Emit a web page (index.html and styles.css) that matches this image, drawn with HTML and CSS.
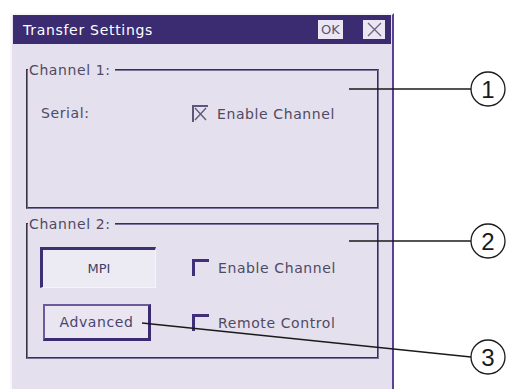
FILE: index.html
```html
<!DOCTYPE html>
<html lang="en">
<head>
    <meta charset="UTF-8">
    <title>Transfer Settings</title>
    <link rel="stylesheet" href="styles.css">
</head>
<body>
    <div class="page">
        <div class="dialog">
            <div class="titlebar">
                <span class="title">Transfer Settings</span>
                <span class="tb-ok">OK</span>
                <span class="tb-close">
                    <svg width="15" height="15" viewBox="0 0 15 15"><path d="M1 1 L14 14 M14 1 L1 14" stroke="#6d6585" stroke-width="1.4" fill="none"/></svg>
                </span>
            </div>

            <div class="dlg-body">
                <!-- Kanal 1 -->
                <fieldset class="group group-1">
                    <legend>Channel 1:</legend>
                    <div class="group-body">
                        <div class="row">
                            <span class="col-left label">Serial:</span>
                            <span class="check checked">
                                <svg width="14" height="15" viewBox="0 0 14 15"><path d="M2 2 L13 14 M13 2 L2 14" stroke="#5e5678" stroke-width="1.3" fill="none"/></svg>
                            </span>
                            <span class="check-text">Enable Channel</span>
                        </div>
                    </div>
                </fieldset>

                <!-- Kanal 2 -->
                <fieldset class="group group-2">
                    <legend>Channel 2:</legend>
                    <div class="group-body">
                        <div class="row">
                            <div class="col-left"><div class="field">MPI</div></div>
                            <span class="check"></span>
                            <span class="check-text">Enable Channel</span>
                        </div>
                        <div class="row row-2">
                            <div class="col-left"><div class="btn">Advanced</div></div>
                            <span class="check"></span>
                            <span class="check-text">Remote Control</span>
                        </div>
                    </div>
                </fieldset>
            </div>
        </div>

        <svg class="callouts" width="508" height="389" viewBox="0 0 508 389">
            <g stroke="#1a1a1a" stroke-width="1.3" fill="none">
                <line x1="349" y1="89" x2="471" y2="89"/>
                <line x1="349" y1="241" x2="471" y2="241"/>
                <line x1="142" y1="323" x2="471" y2="357"/>
            </g>
            <g stroke="#1a1a1a" stroke-width="1.3" fill="#fff">
                <circle cx="488" cy="89" r="17"/>
                <circle cx="488" cy="241" r="17"/>
                <circle cx="488" cy="357" r="17"/>
            </g>
            <g class="num" fill="#1a1a1a" text-anchor="middle">
                <text x="488" y="98">1</text>
                <text x="488" y="250">2</text>
                <text x="488" y="366">3</text>
            </g>
        </svg>
    </div>
</body>
</html>
```

FILE: styles.css
```css
body {
    margin: 0;
    background: #fff;
    font-family: 'DejaVu Sans', sans-serif;
    font-size: 14px;
    letter-spacing: 0.6px;
    color: #4f4a64;
}

.page {
    position: relative;
    width: 508px;
    height: 389px;
    overflow: hidden;
}

.dialog {
    box-sizing: border-box;
    margin: 13px 0 0 10px;
    width: 384px;
    height: 376px;
    padding: 0 1px;
    background: #e5e0ed;
    border-left: 2px solid #f8f6fb;
    border-top: 2px solid #f8f6fb;
    border-right: 2px solid #5d3f95;
}

/* Titelleiste */
.titlebar {
    display: flex;
    align-items: center;
    height: 29px;
    padding: 0 6px 0 10px;
    background: #3b2b70;
}

.title {
    flex: 1;
    color: #fff;
    letter-spacing: 0.7px;
}

.tb-ok,
.tb-close {
    display: flex;
    align-items: center;
    justify-content: center;
    height: 19px;
    background: #ebe7f2;
    color: #5a5472;
    font-size: 13px;
    letter-spacing: 0;
}

.tb-ok {
    width: 25px;
    margin-right: 20px;
}

.tb-close {
    width: 22px;
}

.dlg-body {
    padding: 0 12px 0 13px;
}

/* Gruppenrahmen */
.group {
    margin: 0;
    padding: 0;
    border: 2px groove #7c7498;
}

.group-1 {
    margin-top: 18px;
}

.group-2 {
    margin-top: 7px;
}

.group legend {
    padding: 0 4px 0 1px;
    margin-left: 0;
    line-height: 16px;
}

.group-1 .group-body {
    height: 129px;
    padding: 27px 0 0 13px;
    box-sizing: border-box;
}

.group-2 .group-body {
    height: 125px;
    padding: 15px 0 0 12px;
    box-sizing: border-box;
}

.row {
    display: flex;
    align-items: center;
}

.row-2 {
    margin-top: 16px;
}

.col-left {
    width: 152px;
    flex: none;
}

.group-1 .col-left {
    width: 151px;
}

.label {
    line-height: 17px;
}

.check {
    box-sizing: border-box;
    width: 17px;
    height: 17px;
    flex: none;
    border-top: 3px solid #3f2f7a;
    border-left: 3px solid #3f2f7a;
}

.check.checked {
    border-top: 2px solid #5e5678;
    border-left: 2px solid #5e5678;
    width: 16px;
}

.check.checked svg {
    display: block;
    margin: -1px 0 0 -1px;
}

.check-text {
    margin-left: 9px;
}

/* Eingabefeld und Schaltfläche */
.field {
    box-sizing: border-box;
    width: 116px;
    height: 41px;
    display: flex;
    align-items: center;
    justify-content: center;
    background: #eceaf2;
    border-top: 3px solid #3e2f72;
    border-left: 3px solid #3e2f72;
    border-right: 1px solid #f6f4fa;
    border-bottom: 1px solid #f6f4fa;
    color: #3d3f66;
    font-size: 13px;
    letter-spacing: 0;
}

.btn {
    box-sizing: border-box;
    margin-left: 3px;
    width: 108px;
    height: 37px;
    display: flex;
    align-items: center;
    justify-content: center;
    background: #e9e5f1;
    border: 2px solid #6b5a9c;
    border-right: 3px solid #3a2a70;
    border-bottom: 3px solid #3a2a70;
    color: #4a4570;
}

.callouts {
    position: absolute;
    left: 0;
    top: 0;
}

.num {
    font-family: 'Liberation Sans', sans-serif;
    font-size: 24px;
    letter-spacing: 0;
}
```
